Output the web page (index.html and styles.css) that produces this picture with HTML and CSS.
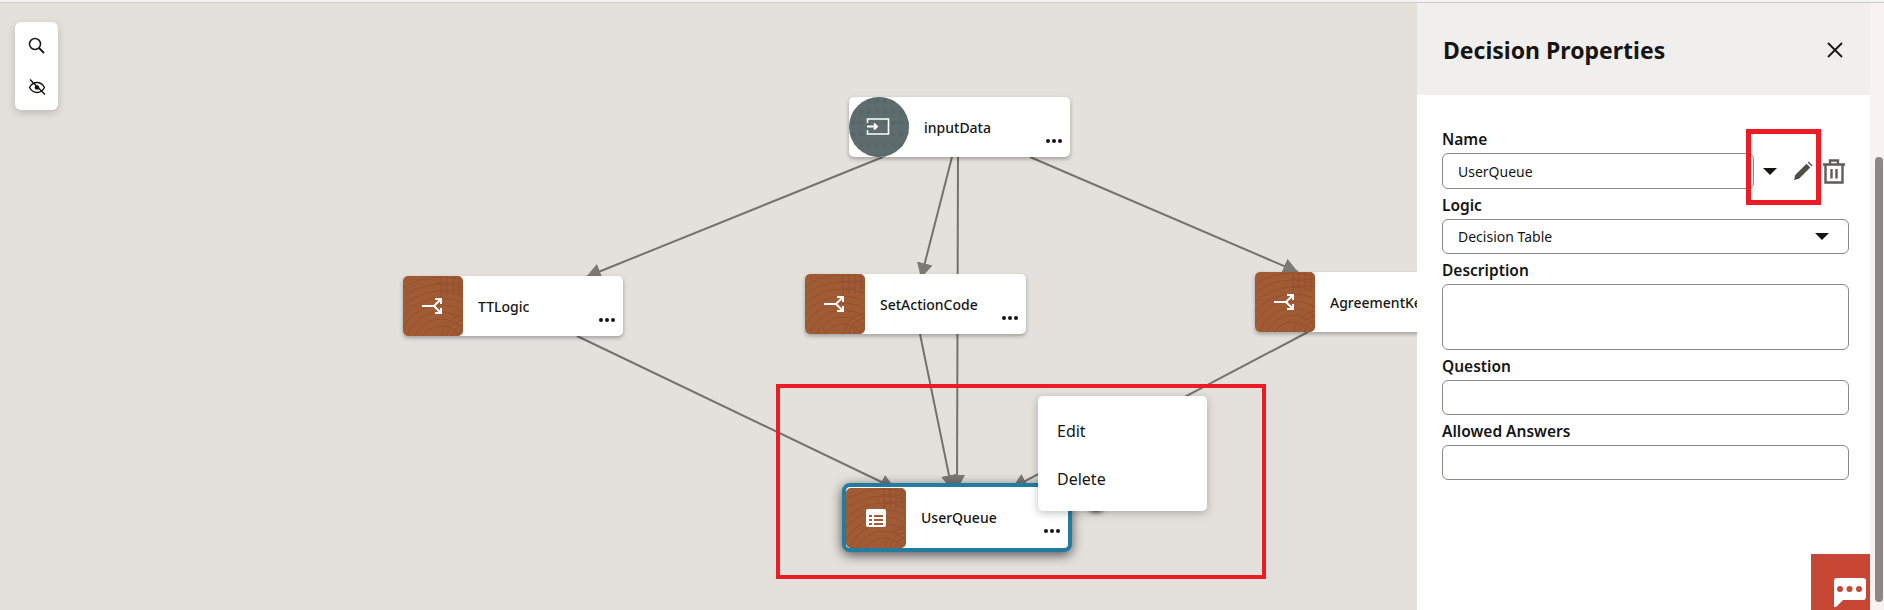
FILE: index.html
```html
<!DOCTYPE html>
<html lang="en">
<head>
    <meta charset="UTF-8">
    <title>Decision Properties</title>
    <link rel="stylesheet" href="styles.css">
</head>
<body>
    <svg class="defs" width="0" height="0">
        <defs>
            <symbol id="wood" viewBox="0 0 60 60">
                <rect width="60" height="60" fill="#a05b35"/>
                <g fill="none" stroke="#8a4c2a" stroke-width="1" opacity="0.6">
                    <circle cx="38" cy="72" r="22"/>
                    <circle cx="38" cy="72" r="29"/>
                    <circle cx="38" cy="72" r="36"/>
                    <circle cx="38" cy="72" r="43"/>
                    <circle cx="38" cy="72" r="50"/>
                    <circle cx="38" cy="72" r="57"/>
                    <circle cx="38" cy="72" r="64"/>
                    <circle cx="38" cy="72" r="71"/>
                    <circle cx="62" cy="62" r="8"/>
                    <circle cx="62" cy="62" r="13"/>
                    <circle cx="62" cy="62" r="18"/>
                    <circle cx="62" cy="62" r="23"/>
                    <path d="M38 0v22M44 0v20M50 0v20M56 0v20M34 7h26M36 14h24"/>
                </g>
            </symbol>
            <symbol id="split" viewBox="0 0 24 24">
                <path d="M1 12h12l6-6M13 12l6 6M14 5h6v5M20 14v5h-6" fill="none" stroke="#fff" stroke-width="2"/>
            </symbol>
            <marker id="arrow" markerUnits="userSpaceOnUse" markerWidth="16" markerHeight="18" refX="15" refY="8" orient="auto">
                <path d="M0 0L15 8L0 16z" fill="#7d7975"/>
            </marker>
            <pattern id="dots" width="8" height="11" patternUnits="userSpaceOnUse">
                <circle cx="4" cy="4" r="2" fill="#566565"/>
            </pattern>
        </defs>
    </svg>

    <div class="topline"></div>

    <div class="page">
        <div class="canvas">
            <div class="toolbar">
                <button class="tool">
                    <svg width="17" height="17" viewBox="0 0 17 17"><circle cx="7" cy="7" r="5.500" fill="none" stroke="#161513" stroke-width="1.500"/><path d="M11 11L16 16" stroke="#161513" stroke-width="1.800"/></svg>
                </button>
                <button class="tool">
                    <svg width="18" height="18" viewBox="0 0 18 18"><path d="M1.500 9.500C3.500 6 6 4.500 9 4.500s5.500 1.500 7.500 5c-2 3.500-4.500 5-7.500 5s-5.500-1.500-7.500-5z" fill="none" stroke="#161513" stroke-width="1.400"/><circle cx="9" cy="9.500" r="2.300" fill="#161513"/><path d="M2 1.500L17 16.500" stroke="#161513" stroke-width="1.400"/></svg>
                </button>
            </div>

            <svg class="edges" width="1417" height="607">
                <g stroke="#75716d" stroke-width="2" fill="none">
                    <path d="M883 154L586 274" marker-end="url(#arrow)"/>
                    <path d="M952 154L921 275" marker-end="url(#arrow)"/>
                    <path d="M958 154L957 487" marker-end="url(#arrow)"/>
                    <path d="M1030 154L1298 269" marker-end="url(#arrow)"/>
                    <path d="M577 333L895 485.500" marker-end="url(#arrow)"/>
                    <path d="M920 331L952 487" marker-end="url(#arrow)"/>
                    <path d="M1308 329L1012 485" marker-end="url(#arrow)"/>
                </g>
            </svg>

            <div class="node node-input">
                <svg class="node-icon round" viewBox="0 0 60 60">
                    <rect width="60" height="60" fill="#5d6c6c"/>
                    <rect width="60" height="60" fill="url(#dots)"/>
                    <path d="M18.500 26v-4h21v15h-21v-4" fill="none" stroke="#fff" stroke-width="1.600"/>
                    <path d="M18 29.500h10M25 26.500l3 3-3 3" fill="none" stroke="#fff" stroke-width="2"/>
                </svg>
                <span class="node-name">inputData</span>
                <span class="more"><i></i><i></i><i></i></span>
            </div>

            <div class="node node-tt">
                <div class="node-icon"><svg class="wood" viewBox="0 0 60 60"><use href="#wood"/></svg><svg class="glyph"><use href="#split"/></svg></div>
                <span class="node-name">TTLogic</span>
                <span class="more"><i></i><i></i><i></i></span>
            </div>

            <div class="node node-action">
                <div class="node-icon"><svg class="wood" viewBox="0 0 60 60"><use href="#wood"/></svg><svg class="glyph"><use href="#split"/></svg></div>
                <span class="node-name">SetActionCode</span>
                <span class="more"><i></i><i></i><i></i></span>
            </div>

            <div class="node node-agreement">
                <div class="node-icon"><svg class="wood" viewBox="0 0 60 60"><use href="#wood"/></svg><svg class="glyph"><use href="#split"/></svg></div>
                <span class="node-name">AgreementKey</span>
            </div>

            <div class="node node-queue">
                <div class="node-icon"><svg class="wood" viewBox="0 0 60 60"><use href="#wood"/></svg>
                    <svg class="glyph glyph-table" viewBox="0 0 20 18"><rect width="20" height="18" rx="2" fill="#fff"/><path d="M3 6h3v2H3zM8 6h9v2H8zM3 10h3v2H3zM8 10h9v2H8zM3 14h3v2H3zM8 14h9v2H8z" fill="#a05b35"/></svg>
                </div>
                <span class="node-name">UserQueue</span>
                <span class="more"><i></i><i></i><i></i></span>
            </div>

            <div class="menu-blob"></div>
            <div class="menu">
                <div class="menu-item">Edit</div>
                <div class="menu-item">Delete</div>
            </div>

            <div class="callout callout-graph"></div>
        </div>

        <div class="panel">
            <div class="panel-head">
                <h2>Decision Properties</h2>
                <svg width="16" height="16" viewBox="0 0 16 16"><path d="M1 1L15 15M15 1L1 15" stroke="#161513" stroke-width="1.800"/></svg>
            </div>
            <div class="panel-body">
                <div class="field">
                    <label>Name</label>
                    <div class="name-row">
                        <input type="text" class="name-input" value="UserQueue">
                        <span class="caret"></span>
                        <svg class="pencil" width="20" height="20" viewBox="0 0 20 20"><path d="M1 19l1.200-5L13.500 2.700l3.800 3.800L6 17.800z" fill="#4f4c4a"/><path d="M14.800 1.400l1-.8 3.800 3.800-.8 1z" fill="#4f4c4a"/></svg>
                        <svg class="trash" width="24" height="25" viewBox="0 0 24 25"><path d="M1 5.500h22M8 5V1.500h8V5M3.500 6v17.500h17V6M9.500 10v9.500M14.500 10v9.500" fill="none" stroke="#5f5c5a" stroke-width="2.400"/></svg>
                    </div>
                </div>
                <div class="field">
                    <label>Logic</label>
                    <div class="select-box">Decision Table<span class="caret"></span></div>
                </div>
                <div class="field">
                    <label>Description</label>
                    <textarea></textarea>
                </div>
                <div class="field">
                    <label>Question</label>
                    <input type="text">
                </div>
                <div class="field">
                    <label>Allowed Answers</label>
                    <input type="text">
                </div>
            </div>
            <div class="chat">
                <svg width="33" height="32" viewBox="0 0 33 32"><path d="M3 0h27a3 3 0 0 1 3 3v16a3 3 0 0 1-3 3H10l-7 7H1V3a3 3 0 0 1 2-3z" fill="#fff"/><circle cx="7" cy="11" r="3" fill="#c74634"/><circle cx="16.500" cy="11" r="3" fill="#c74634"/><circle cx="26" cy="11" r="3" fill="#c74634"/></svg>
            </div>
            <div class="callout callout-name"></div>
        </div>

        <div class="scrollbar"><div class="thumb"></div></div>
    </div>
</body>
</html>
```

FILE: styles.css
```css
* {
    box-sizing: border-box;
}
html, body {
    margin: 0;
    height: 100%;
    overflow: hidden;
}
body {
    font-family: "Noto Sans", sans-serif;
    color: #161513;
    background: #fff;
}
.defs {
    position: absolute;
}
.topline {
    height: 3px;
    background: #f4f4f3;
    border-bottom: 1px solid #cfcdca;
}
.page {
    display: flex;
    height: 607px;
}

/* graph */
.canvas {
    position: relative;
    width: 1417px;
    background: #e4e1dc;
    overflow: hidden;
}
.edges {
    position: absolute;
    left: 0;
    top: 0;
}
.toolbar {
    position: absolute;
    left: 15px;
    top: 19px;
    width: 43px;
    height: 88px;
    padding: 3px 0;
    display: flex;
    flex-direction: column;
    align-items: center;
    background: #fff;
    border-radius: 6px;
    box-shadow: 0 3px 8px rgba(0,0,0,0.18);
}
.tool {
    flex: 1;
    width: 100%;
    border: none;
    background: none;
    padding: 0;
    display: flex;
    align-items: center;
    justify-content: center;
}
.node {
    position: absolute;
    height: 60px;
    display: flex;
    align-items: center;
    background: #fff;
    border-radius: 5px;
    box-shadow: 0 2px 4px rgba(0,0,0,0.3);
}
.node-icon {
    position: relative;
    flex: none;
    width: 60px;
    height: 60px;
    border-radius: 5px;
    overflow: hidden;
}
.node-icon.round {
    border-radius: 50%;
}
.wood {
    display: block;
    width: 60px;
    height: 60px;
}
.glyph {
    position: absolute;
    left: 18px;
    top: 18px;
    width: 24px;
    height: 24px;
}
.glyph-table {
    left: 20px;
    top: 21px;
    width: 20px;
    height: 18px;
}
.node-name {
    margin-left: 15px;
    font-size: 14px;
    font-weight: 500;
    white-space: nowrap;
}
.more {
    position: absolute;
    right: 8px;
    bottom: 14px;
    display: flex;
    gap: 2px;
}
.more i {
    width: 4px;
    height: 4px;
    border-radius: 50%;
    background: #161513;
}
.node-input {
    left: 849px;
    top: 94px;
    width: 221px;
}
.node-tt {
    left: 403px;
    top: 273px;
    width: 220px;
}
.node-action {
    left: 805px;
    top: 271px;
    width: 221px;
}
.node-agreement {
    left: 1255px;
    top: 269px;
    width: 230px;
}
.node-queue {
    left: 842px;
    top: 480px;
    width: 230px;
    height: 69px;
    border: 4px solid #227c9f;
    border-radius: 8px;
    box-shadow: 0 3px 12px rgba(0,0,0,0.65);
}
.node-queue .more {
    bottom: 15px;
}
.menu-blob {
    position: absolute;
    left: 1085px;
    top: 488px;
    width: 22px;
    height: 22px;
    border-radius: 50%;
    background: #55524f;
    filter: blur(2px);
}
.menu {
    position: absolute;
    left: 1038px;
    top: 393px;
    width: 169px;
    height: 115px;
    padding: 11px 0;
    background: #fff;
    border-radius: 5px;
    box-shadow: 0 2px 8px rgba(0,0,0,0.25);
}
.menu-item {
    height: 48px;
    line-height: 48px;
    padding-left: 19px;
    font-size: 16px;
}
.callout {
    position: absolute;
    border: 4px solid #ed1c24;
}
.callout-graph {
    left: 776px;
    top: 381px;
    width: 490px;
    height: 195px;
}

/* properties panel */
.panel {
    position: relative;
    width: 453px;
    background: #fff;
}
.panel-head {
    height: 92px;
    padding: 2px 27px 0 26px;
    display: flex;
    align-items: center;
    justify-content: space-between;
    background: #f1efed;
}
.panel-head h2 {
    margin: 0;
    font-size: 23px;
    font-weight: 700;
}
.panel-body {
    padding: 34px 21px 0 25px;
    display: flex;
    flex-direction: column;
    gap: 6px;
}
.field {
    display: flex;
    flex-direction: column;
    gap: 4px;
}
label {
    height: 20px;
    line-height: 20px;
    font-size: 15.5px;
    font-weight: 600;
}
input, textarea, .select-box {
    display: block;
    width: 100%;
    height: 35px;
    padding: 0 15px;
    border: 1px solid #8b8885;
    border-radius: 6px;
    background: #fff;
    font-family: "Noto Sans", sans-serif;
    font-size: 14px;
    color: #161513;
}
textarea {
    height: 66px;
    resize: none;
}
.select-box {
    display: flex;
    align-items: center;
    justify-content: space-between;
    padding-right: 19px;
}
.name-row {
    display: flex;
    align-items: center;
}
.name-input {
    width: 312px;
    height: 36px;
    flex: none;
}
.caret {
    flex: none;
    width: 0;
    height: 0;
    border-left: 7px solid transparent;
    border-right: 7px solid transparent;
    border-top: 7px solid #161513;
}
.name-row .caret {
    margin-left: 9px;
}
.pencil {
    margin-left: 16px;
}
.trash {
    margin-left: 9px;
}
.chat {
    position: absolute;
    right: 0;
    bottom: 0;
    width: 59px;
    height: 56px;
    padding: 24px 0 0 22px;
    background: #c74634;
    overflow: hidden;
}
.callout-name {
    left: 329px;
    top: 126px;
    width: 75px;
    height: 76px;
    border-width: 5px;
}
.scrollbar {
    position: relative;
    width: 14px;
    background: #f8f3f1;
}
.thumb {
    position: absolute;
    left: 5px;
    right: 1px;
    top: 154px;
    height: 445px;
    border-radius: 4px;
    background: #8b8887;
}
```
